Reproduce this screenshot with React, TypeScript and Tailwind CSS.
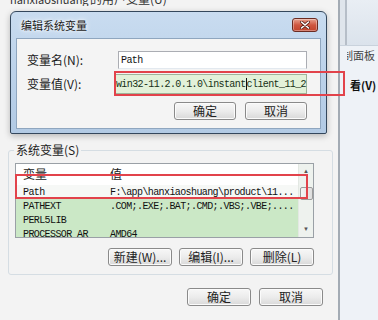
import React from 'react';

const cjk = "font-['Noto_Sans_CJK_SC',sans-serif]";
const mono = "font-['Liberation_Mono',monospace]";

function WinButton({ children, wide }: { children: React.ReactNode; wide?: boolean }) {
  return (
    <div
      className={`flex h-[18px] items-center justify-center rounded-[3px] border border-[#8a8a8a] bg-gradient-to-b from-[#f7f7f7] via-[#ececec] to-[#d9d9d9] text-[12px] leading-none text-[#222] shadow-[inset_0_0_0_1px_#fbfbfb] ${cjk} ${wide ? 'w-[64px]' : 'w-[62px]'}`}
    >
      {children}
    </div>
  );
}

const rows = [
  { name: 'PATHEXT', value: '.COM;.EXE;.BAT;.CMD;.VBS;.VBE;....' },
  { name: 'PERL5LIB', value: '' },
  { name: 'PROCESSOR_AR', value: 'AMD64' },
];

export default function App() {
  return (
    <div className="relative flex h-[320px] w-[378px] overflow-hidden bg-[#f3f3f3]">
      {/* parent "环境变量" window */}
      <div className="flex w-[338px] flex-col">
        <div className={`h-[10px] overflow-hidden pl-[10px] text-[12px] leading-[14px] text-[#333] ${cjk}`}>
          <div className="-mt-[8px] flex">
            <span className="w-[80px] shrink-0 overflow-hidden whitespace-nowrap text-[11px]">hanxiaoshuang</span>
            <span className="whitespace-nowrap">的用户变量(U)</span>
          </div>
        </div>
        <div className="h-[133px]" />

        <fieldset className="ml-[8px] w-[325px] rounded-[3px] border border-[#d5dde3] pb-[8px]">
          <legend className={`ml-[5px] px-[2px] text-[12px] leading-[14px] text-[#222] ${cjk}`}>系统变量(S)</legend>

          <div className="ml-[6px] mt-[6px] flex h-[75px] w-[299px] overflow-hidden border border-[#9aa0a6] bg-white">
            <div className="flex flex-1 flex-col">
              <div className={`flex h-[21px] shrink-0 pt-[3px] text-[12px] leading-[14px] text-[#222] ${cjk}`}>
                <span className="w-[94px] pl-[7px]">变量</span>
                <span>值</span>
              </div>
              <div className={`flex h-[14px] shrink-0 items-center bg-[#f6f8f6] text-[10px] tracking-[-0.6px] text-[#111] ${mono}`}>
                <span className="w-[94px] pl-[7px]">Path</span>
                <span className="whitespace-nowrap">F:\app\hanxiaoshuang\product\11...</span>
              </div>
              <div className="flex flex-1 flex-col bg-[#cbe8c6]">
                {rows.map(r => (
                  <div key={r.name} className={`flex h-[14px] shrink-0 items-center text-[10px] tracking-[-0.6px] text-[#111] ${mono}`}>
                    <span className="w-[94px] pl-[7px]">{r.name}</span>
                    <span className="whitespace-nowrap">{r.value}</span>
                  </div>
                ))}
              </div>
            </div>
            {/* scrollbar */}
            <div className="flex w-[15px] flex-col items-center border-l border-[#e3e8e3] bg-[#eef2ee]">
              <div className="flex h-[15px] items-center justify-center text-[6px] text-[#555]">▲</div>
              <div className="mt-[8px] h-[13px] w-[13px] rounded-[2px] border border-[#9c9c9c] bg-gradient-to-r from-[#f5f5f5] to-[#dedede]" />
              <div className="flex-1" />
              <div className="flex h-[15px] items-center justify-center text-[6px] text-[#555]">▼</div>
            </div>
          </div>

          <div className="mt-[10px] flex justify-end gap-[7px] pr-[18px]">
            <WinButton wide>新建(W)...</WinButton>
            <WinButton wide>编辑(I)...</WinButton>
            <WinButton wide>删除(L)</WinButton>
          </div>
        </fieldset>

        <div className="mt-[13px] flex justify-end gap-[8px] pr-[15px]">
          <WinButton wide>确定</WinButton>
          <WinButton wide>取消</WinButton>
        </div>
      </div>

      {/* window behind, on the right */}
      <div className="flex flex-1">
        <div className="w-[2px] bg-[#a3abb4]" />
        <div className="flex flex-1 flex-col overflow-hidden bg-[#eef2f7]">
          <div className="flex h-[46px] shrink-0 border-b border-[#c9d2dc]">
            <div className="w-[7px] border-r-2 border-[#b6bec8] bg-[#dfe5ec]" />
            <div className="flex-1 bg-gradient-to-b from-[#e9eef4] to-[#dbe3ec]" />
          </div>
          <div className="ml-[7px] mt-[2px] overflow-hidden">
            <div className={`-ml-[16px] whitespace-nowrap text-[11px] leading-[14px] text-[#444] ${cjk}`}>控制面板</div>
          </div>
          <div className={`mt-[16px] whitespace-nowrap pl-[10px] text-[11px] font-bold leading-[14px] text-[#111] ${cjk}`}>看(V)</div>
        </div>
      </div>

      {/* "编辑系统变量" dialog on top */}
      <div className="absolute left-[10px] top-[11px] flex h-[123px] w-[317px] flex-col rounded-t-[6px] rounded-b-[2px] border border-[#34475c] bg-gradient-to-b from-[#c9dcf0] via-[#bcd2ea] to-[#b2cae4] shadow-[0_2px_6px_rgba(0,0,0,0.25)]">
        <div className="flex h-[26px] shrink-0 items-center justify-between pl-[10px] pr-[8px]">
          <span className={`text-[11px] leading-none text-[#1b1b1b] [text-shadow:0_0_6px_#fff,0_0_3px_#fff] ${cjk}`}>编辑系统变量</span>
          <div className="flex h-[14px] w-[26px] items-center justify-center rounded-[3px] border border-[#6b2b22] bg-gradient-to-b from-[#e7a08f] via-[#cf5640] to-[#c2432c] shadow-[inset_0_0_0_1px_rgba(255,255,255,0.35)]">
            <svg width="10" height="8" viewBox="0 0 10 8">
              <path d="M1.5 1 L8.5 7 M8.5 1 L1.5 7" stroke="#5a1f18" strokeWidth="3" strokeLinecap="round" />
              <path d="M1.5 1 L8.5 7 M8.5 1 L1.5 7" stroke="#ffffff" strokeWidth="1.6" strokeLinecap="round" />
            </svg>
          </div>
        </div>
        <div className="mx-[5px] mb-[4px] flex flex-1 flex-col border border-[#8fa6bf] bg-[#f4f4f4] pl-[10px] pr-[13px] pt-[12px]">
          <div className="flex h-[18px] items-center">
            <span className={`w-[91px] text-[12px] text-[#1a1a1a] ${cjk}`}>变量名(N):</span>
            <div className={`flex h-[18px] flex-1 items-center border border-[#abadb3] border-b-[#e3e9ef] bg-white pl-[2px] text-[10px] tracking-[-0.6px] text-[#111] ${mono}`}>
              Path
            </div>
          </div>
          <div className="mt-[5px] flex h-[20px] items-center">
            <span className={`w-[91px] text-[12px] text-[#1a1a1a] ${cjk}`}>变量值(V):</span>
            <div className={`flex h-[20px] flex-1 items-center whitespace-nowrap border border-[#9fb49a] bg-[#e2f1d9] pl-[1px] text-[10px] tracking-[-0.6px] text-[#163016] ${mono}`}>
              <span>win32-11.2.0.1.0\instant</span>
              <span className="h-[12px] w-px bg-[#111]" />
              <span>client_11_2</span>
            </div>
          </div>
          <div className="mt-[8px] flex justify-end gap-[9px]">
            <WinButton>确定</WinButton>
            <WinButton>取消</WinButton>
          </div>
        </div>
      </div>

      {/* red annotation boxes */}
      <div className="absolute left-[114px] top-[71px] h-[25px] w-[231px] border-2 border-[#e2434b]" />
      <div className="absolute left-[15px] top-[174px] h-[25px] w-[293px] border-2 border-[#e2434b]" />
    </div>
  );
}
